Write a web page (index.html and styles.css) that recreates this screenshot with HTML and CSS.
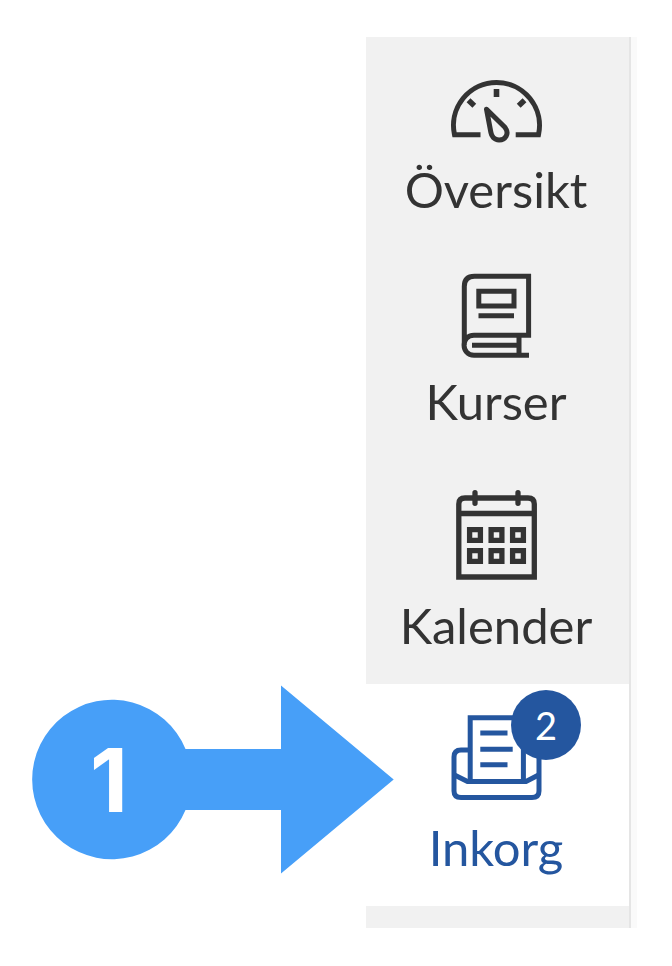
FILE: index.html
```html
<!DOCTYPE html>
<html lang="sv">
<head>
<meta charset="utf-8">
<title>Inkorg</title>
<link rel="stylesheet" href="styles.css">
</head>
<body>
<nav class="sidebar">
  <a class="item overview">
    <svg class="icon" width="115" height="80" viewBox="0 0 115 80" fill="none" stroke="currentColor" stroke-width="5">
      <path d="M40.500 64.700H14.500A43 43 0 1 1 98.500 64.700H75.700"/>
      <path d="M56.500 19v8M28.500 30.300l5.800 5.400M84.500 30.300l-5.800 5.400" stroke-width="5.600"/>
      <path d="M46.500 39.200L64.900 57.300C70 64 65 70 59 69.900C54 69.800 51.500 66 50.900 62.500Z" stroke-linejoin="round"/>
    </svg>
    <span class="label">Översikt</span>
  </a>
  <a class="item courses">
    <svg class="icon" width="115" height="110" viewBox="0 0 115 110" fill="none" stroke="currentColor" stroke-width="5">
      <path d="M24.300 85V26.500Q24.300 16.300 34.500 16.300H88.600V75.200H34C20.500 75.200 21 95.200 34 95.200H89"/>
      <path d="M38.800 31.200H74V46H38.800ZM38.500 55.800H74M32 85.200H79M79 75V95"/>
    </svg>
    <span class="label">Kurser</span>
  </a>
  <a class="item calendar">
    <svg class="icon" width="115" height="110" viewBox="0 0 115 110" fill="none" stroke="currentColor" stroke-width="5.300">
      <path d="M18.800 97V24Q18.800 18 25 18H88Q94.300 18 94.300 24V97ZM19 33.500H94"/>
      <path d="M35 12.700V23.300M78 12.700V23.300" stroke-linecap="round"/>
      <path d="M29.600 49.600H40.400V60.400H29.600ZM51.100 49.600H61.900V60.400H51.100ZM72.600 49.600H83.400V60.400H72.600ZM29.600 70.600H40.400V81.400H29.600ZM51.100 70.600H61.900V81.400H51.100ZM72.600 70.600H83.400V81.400H72.600Z"/>
    </svg>
    <span class="label">Kalender</span>
  </a>
  <a class="item inbox active">
    <span class="icon-wrap">
      <svg class="icon" width="115" height="120" viewBox="0 0 115 120" fill="none" stroke="currentColor" stroke-width="5">
        <path d="M30.200 90.700V27.700H83.400V90.700M30 60H21Q14 60 14 67V101Q14 107.500 21 107.500H92Q99 107.500 99 101V67Q99 60 92 60H84"/>
        <path d="M14 84.700L27.500 91.500H86L99 84.700M40.300 43H67.500M40.300 59.200H72.700M40.300 74.800H67.500"/>
      </svg>
      <span class="badge">2</span>
    </span>
    <span class="label">Inkorg</span>
  </a>
</nav>
<div class="callout">
  <svg class="pointer" width="362" height="190" viewBox="0 0 362 190">
    <path fill="currentColor" d="M153.500 64H249V.500L361.700 94.500L249 188.500V125H153.500A79.700 79.700 0 1 1 153.500 64Z"/>
  </svg>
  <span class="step">1</span>
</div>
</body>
</html>
```
FILE: styles.css
```css
body {
  margin: 0;
  width: 672px;
  height: 966px;
  position: relative;
  overflow: hidden;
  background: #fff;
  font-family: Lato, sans-serif;
}

.sidebar {
  box-sizing: border-box;
  width: 265px;
  height: 891px;
  margin: 37px 0 0 366px;
  display: flow-root;
  background: #f1f1f1;
  border-right: 2px solid #e5e5e5;
  box-shadow: 6px 0 0 #fafafa;
}

.item {
  box-sizing: border-box;
  display: flex;
  flex-direction: column;
  align-items: center;
  color: #333;
}

.overview { height: 210px; padding-top: 33px; gap: 9px; }
.courses { height: 213px; padding-top: 13px; gap: 1px; }
.calendar { height: 224px; padding-top: 20px; gap: 5px; }
.inbox { height: 222px; padding-top: 6px; gap: 7px; }

.active {
  background: #fff;
  color: #24569f;
}

.icon { display: block; }

.icon-wrap { position: relative; }

.badge {
  position: absolute;
  left: 71px;
  top: 0;
  width: 70px;
  height: 70px;
  border-radius: 50%;
  background: #24569f;
  color: #fff;
  font-size: 38px;
  line-height: 71px;
  text-align: center;
}

.label {
  padding-right: 3px;
  font-size: 49px;
  line-height: 60px;
  white-space: nowrap;
}

.callout {
  position: absolute;
  left: 32px;
  top: 685px;
  color: #479ff8;
}

.pointer { display: block; }

.step {
  position: absolute;
  left: 0;
  top: 45px;
  width: 154px;
  color: #fff;
  font: 700 88px/100px Inter, sans-serif;
  text-align: center;
}
```
